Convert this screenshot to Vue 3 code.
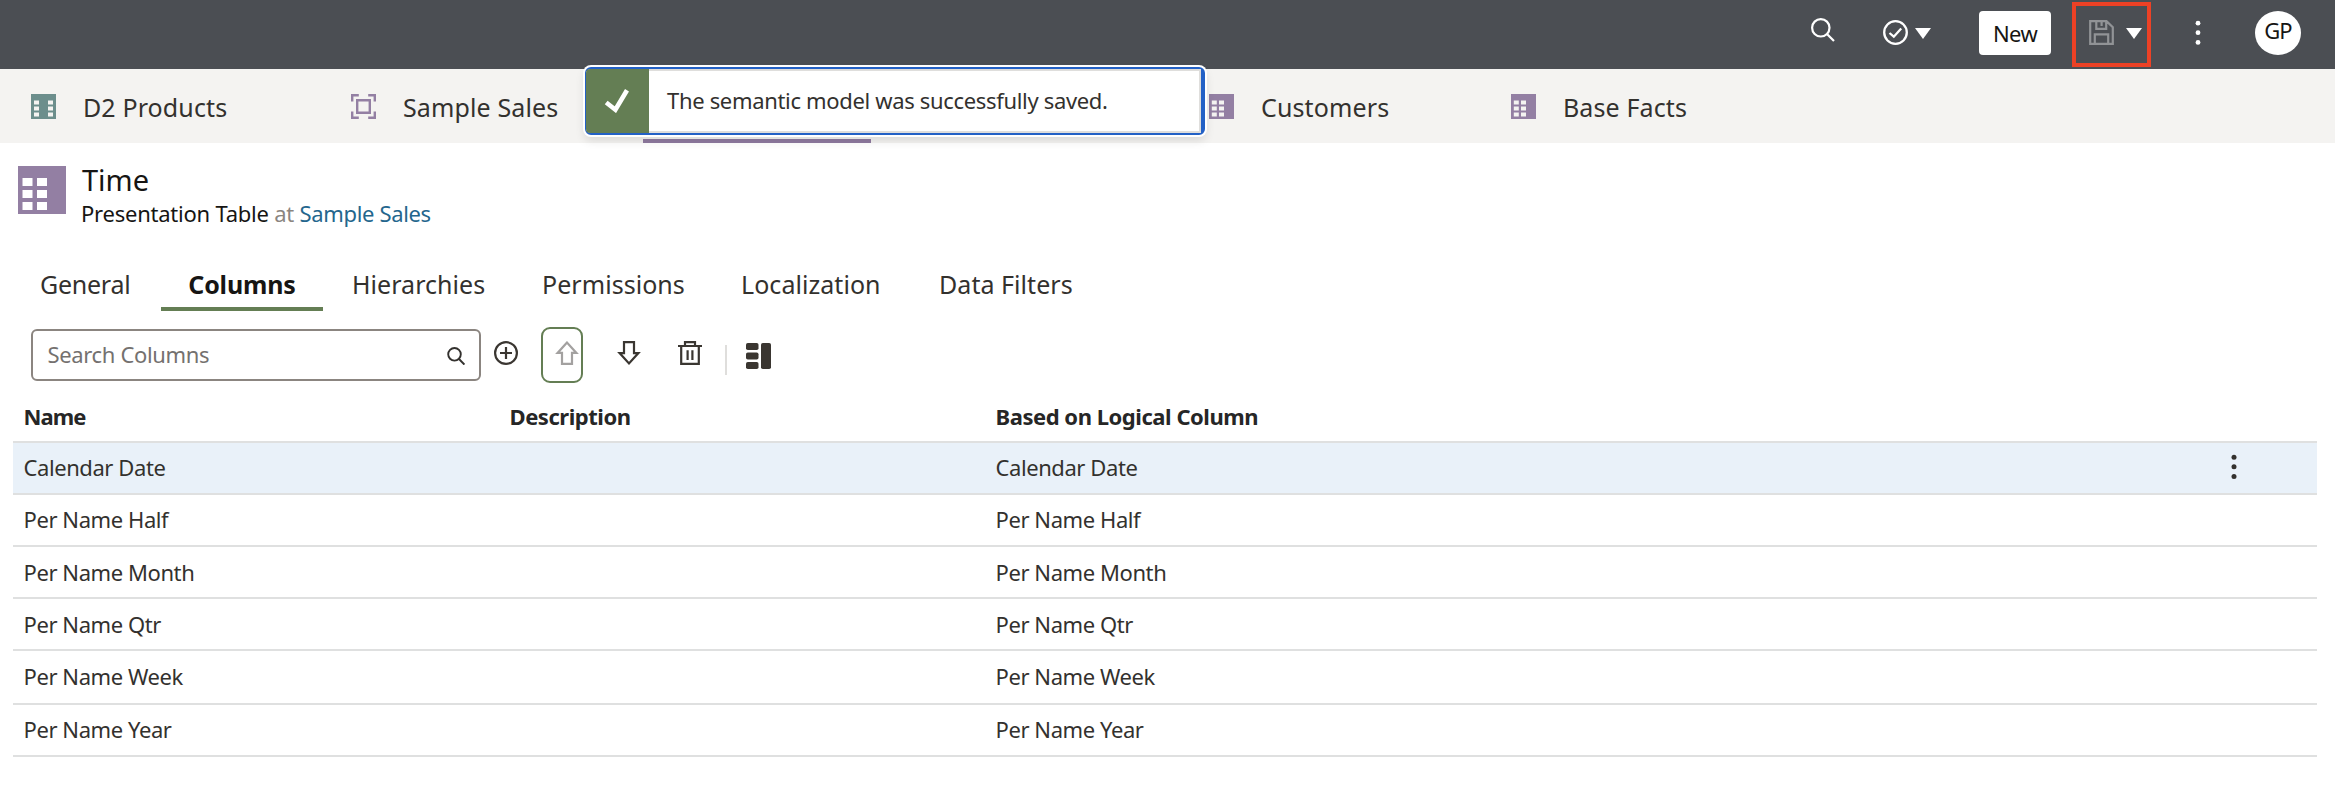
<script setup>
const editorTabs = [
  { label: 'D2 Products', icon: 'logical' },
  { label: 'Sample Sales', icon: 'subject' },
  { label: '', icon: '', active: true },
  { label: 'Customers', icon: 'table' },
  { label: 'Base Facts', icon: 'table' },
]
const sections = ['General', 'Columns', 'Hierarchies', 'Permissions', 'Localization', 'Data Filters']
const columns = ['Calendar Date', 'Per Name Half', 'Per Name Month', 'Per Name Qtr', 'Per Name Week', 'Per Name Year']
</script>

<template>
  <div class="page">
    <header class="topbar">
      <svg class="find" viewBox="0 0 24 24"><circle cx="9.8" cy="9.8" r="8.7" /><path d="M16 16l7 7" /></svg>
      <svg class="valid" viewBox="0 0 25 25"><circle cx="12.5" cy="12.5" r="11.3" /><path d="M6.5 13l4.3 3.7 7.4-8.2" /></svg>
      <svg class="caret" viewBox="0 0 16 11"><path d="M0 0h16L8 11z" /></svg>
      <button class="new">New</button>
      <div class="save-group">
        <svg class="save" viewBox="0 0 25 25"><path d="M1.2 1.2h16.3l6.3 6v16.6H1.2zM7.3 1v7.8h9.9V1M12.6 1v5M5.8 24V14.4h13.4V24" /></svg>
        <svg class="caret" viewBox="0 0 16 11"><path d="M0 0h16L8 11z" /></svg>
      </div>
      <svg class="dots" viewBox="0 0 6 26"><circle cx="3" cy="3.2" r="2.4" /><circle cx="3" cy="12.7" r="2.4" /><circle cx="3" cy="22.4" r="2.4" /></svg>
      <div class="avatar">GP</div>
    </header>

    <nav class="editors">
      <div v-for="(tab, i) in editorTabs" :key="i" class="editor" :class="{ active: tab.active }">
        <svg v-if="tab.icon === 'logical'" viewBox="0 0 25 25">
          <path fill="#6c8e8c" d="M0 0h25v25H0z" />
          <path fill="#f4f3f1" d="M3 6.5h5v4H3zm0 6h5v4H3zm0 6h5v4H3zM17 6.5h5v4h-5zm0 6h5v4h-5zm0 6h5v4h-5z" />
        </svg>
        <svg v-else-if="tab.icon === 'subject'" viewBox="0 0 25 25" fill="none" stroke="#937fa3">
          <path stroke-width="2.4" d="M1.2 7.5V1.2h6.6M17.2 1.2h6.6v6.3M23.8 17.5v6.3h-6.6M7.8 23.8H1.2v-6.3" />
          <path stroke-width="2.4" d="M6.2 6.2h12.6v12.6H6.2z" />
        </svg>
        <svg v-else-if="tab.icon === 'table'" viewBox="0 0 25 25">
          <path fill="#937fa3" d="M0 0h25v25H0z" />
          <path fill="#f4f3f1" d="M2.8 6.5h5v4h-5zm0 6h5v4h-5zm0 6h5v4h-5zM10 6.5h5v4h-5zm0 6h5v4h-5zm0 6h5v4h-5z" />
        </svg>
        <span v-if="tab.label">{{ tab.label }}</span>
      </div>
    </nav>

    <section class="heading">
      <svg viewBox="0 0 48 48">
        <path fill="#937fa3" d="M0 0h48v48H0z" />
        <path fill="#fff" d="M4.5 12h10v8h-10zm0 12h10v8h-10zm0 12h10v8h-10zM19 12h10v8H19zm0 12h10v8H19zm0 12h10v8H19z" />
      </svg>
      <div>
        <h1>Time</h1>
        <p>Presentation Table <span class="at">at</span> <a>Sample Sales</a></p>
      </div>
    </section>

    <nav class="sections">
      <div v-for="s in sections" :key="s" :class="{ current: s === 'Columns' }">{{ s }}</div>
    </nav>

    <div class="toolbar">
      <div class="search">
        <span>Search Columns</span>
        <svg viewBox="0 0 18 18"><circle cx="7.5" cy="7.3" r="6.3" /><path d="M12 12l5.4 5.6" /></svg>
      </div>
      <svg class="tool plus" viewBox="0 0 24 24"><circle cx="12" cy="12" r="10.9" /><path d="M12 6v12M6 12h12" /></svg>
      <button class="up">
        <svg class="tool" viewBox="0 0 24 24"><path d="M12 1.6L2.6 11.9H7v11h10v-11h4.4z" /></svg>
      </button>
      <svg class="tool down" viewBox="0 0 24 24"><path d="M7 1.1h10v11h4.4L12 22.4 2.6 12.1H7z" /></svg>
      <svg class="tool trash" viewBox="0 0 24 24"><path d="M0 5h24M7 5V1.1h10V5M3.2 5v17.9h17.6V5M9.6 9.3v9.6M14.4 9.3v9.6" /></svg>
      <i class="divider"></i>
      <svg class="layout" viewBox="0 0 25 26"><rect width="12.5" height="7" rx="1.8" /><rect y="9.5" width="12.5" height="7" rx="1.8" /><rect y="19" width="12.5" height="7" rx="1.8" /><rect x="15" width="10" height="26" rx="1.8" /></svg>
    </div>

    <div class="table">
      <div class="row head"><span>Name</span><span>Description</span><span>Based on Logical Column</span></div>
      <div v-for="(c, i) in columns" :key="c" class="row" :class="{ selected: i === 0, low: i > 1 && i < 5, tall: i === 4 }">
        <span>{{ c }}</span><span></span><span>{{ c }}</span>
        <svg v-if="i === 0" class="dots" viewBox="0 0 6 26"><circle cx="3" cy="3.2" r="2.5" /><circle cx="3" cy="12.7" r="2.5" /><circle cx="3" cy="22.4" r="2.5" /></svg>
      </div>
    </div>

    <div class="toast">
      <div class="status"><svg viewBox="0 0 26 25"><path d="M2.2 14.5l9.2 7.2L23 2.2" /></svg></div>
      <div class="message">The semantic model was successfully saved.</div>
    </div>
  </div>
</template>

<style>
body { margin: 0; background: #fff; }
</style>

<style scoped>
.page {
  position: relative;
  width: 2335px;
  height: 796px;
  overflow: hidden;
  font-family: "Noto Sans", sans-serif;
  font-size: 22px;
  letter-spacing: -0.35px;
  color: #33312e;
  background: #fff;
}
svg { display: block; flex: none; }
button { padding: 0; font: inherit; letter-spacing: inherit; }
span, a, p, h1, .editor, .sections div { white-space: nowrap; }

.topbar {
  box-sizing: border-box;
  height: 69px;
  display: flex;
  align-items: flex-start;
  padding-left: 1811px;
  background: #4b4e53;
}
.find { width: 24px; height: 24px; margin-top: 18px; fill: none; stroke: #fff; stroke-width: 2.2; }
.valid { width: 25px; height: 25px; margin: 20px 0 0 48px; fill: none; stroke: #fff; stroke-width: 2.3; }
.caret { width: 16px; height: 11px; fill: #fff; }
.topbar > .caret { margin: 28px 0 0 7px; }
.new {
  width: 72px;
  height: 44px;
  margin: 11px 0 0 48px;
  border: 0;
  border-radius: 4px;
  background: #fff;
  color: #161513;
  letter-spacing: -0.6px;
  line-height: 43px;
}
.save-group {
  box-sizing: border-box;
  width: 79px;
  height: 65px;
  margin: 2px 0 0 21px;
  border: 4px solid #ed4125;
  display: flex;
}
.save { width: 25px; height: 25px; margin: 14px 0 0 13px; fill: none; stroke: #919396; stroke-width: 2.2; }
.save-group .caret { margin: 22px 0 0 12px; }
.dots { width: 6px; height: 26px; }
.topbar .dots { margin: 20px 0 0 44px; fill: #fff; }
.avatar {
  width: 46px;
  height: 44px;
  margin: 11px 0 0 54px;
  border-radius: 50%;
  background: #fff;
  color: #161513;
  text-align: center;
  line-height: 39px;
  letter-spacing: -0.8px;
}

.editors {
  height: 74px;
  display: grid;
  grid-template-columns: 320px 323px 535px 302px 1fr;
  grid-template-rows: 74px;
  background: #f4f3f1;
  font-size: 25px;
  letter-spacing: 0.12px;
  line-height: 77px;
}
.editor { display: flex; gap: 27px; padding-left: 31px; }
.editor svg { width: 25px; height: 25px; margin-top: 25px; }
.editor.active { width: 228px; box-sizing: border-box; border-bottom: 4px solid #8f7a9f; }

.heading { display: flex; height: 108px; }
.heading svg { width: 48px; height: 48px; margin: 23px 16px 0 18px; }
h1 { margin: 18px 0 0; font-size: 29px; font-weight: 400; letter-spacing: 0; line-height: 38px; color: #161513; }
p { margin: -1px 0 0 -1px; line-height: 30px; letter-spacing: -0.23px; color: #161513; }
.at { color: #8b8580; }
a { color: #24668d; letter-spacing: -0.35px; }

.sections {
  display: grid;
  grid-template-columns: 148px 162px 190px 199px 198px 1fr;
  grid-template-rows: 60px;
  padding-left: 13px;
  font-size: 25px;
  letter-spacing: 0.05px;
  line-height: 66px;
}
.sections div { padding-left: 29px; }
.sections div:first-child { padding-left: 27px; letter-spacing: -0.25px; }
.sections .current {
  padding: 0;
  text-align: center;
  font-weight: 700;
  letter-spacing: -0.15px;
  color: #161513;
  box-sizing: border-box;
  border-bottom: 4px solid #647e54;
}

.toolbar {
  box-sizing: border-box;
  display: flex;
  align-items: flex-start;
  height: 83px;
  padding: 16px 0 0 31px;
}
.search {
  box-sizing: border-box;
  width: 450px;
  height: 52px;
  margin-top: 2px;
  padding: 0 14.5px;
  border: 2px solid #8b8580;
  border-radius: 6px;
  display: flex;
  justify-content: space-between;
  color: #74716f;
  line-height: 47px;
}
.search svg { width: 18px; height: 18px; margin-top: 16px; fill: none; stroke: #33312e; stroke-width: 1.9; }
.tool { width: 24px; height: 24px; fill: none; stroke: #3a3631; stroke-width: 2.2; }
.plus { margin: 14px 0 0 13px; }
.up {
  box-sizing: border-box;
  width: 42px;
  height: 56px;
  margin-left: 23px;
  border: 2px solid #647e54;
  border-radius: 9px;
  background: none;
  display: flex;
}
.up .tool { margin: 12px 0 0 12px; stroke: #a3a1a0; }
.down { margin: 14px 0 0 33.5px; }
.trash { margin: 14px 0 0 37px; }
.divider { width: 2px; height: 30px; margin: 18px 0 0 23px; background: #dfdedc; }
.layout { width: 25px; height: 26px; margin: 16px 0 0 19px; fill: #3a3631; }

.table { margin: 0 18px 0 13px; }
.row {
  display: grid;
  grid-template-columns: 486px 486px 1222px auto;
  height: 50px;
  border-bottom: 2px solid #dfe0e0;
  line-height: 48px;
}
.row span { padding-left: 10.5px; letter-spacing: -0.42px; }
.row.head { height: 47px; line-height: 45px; font-weight: 700; color: #262626; }
.row.head span { letter-spacing: -0.46px; }
.row.head span:first-child { letter-spacing: -0.9px; }
.row.selected { background: #e9f1f9; }
.row.low { line-height: 51px; }
.row.tall { height: 52px; }
.row .dots { margin: 11px 0 0 24px; fill: #33312e; }

.toast {
  position: absolute;
  left: 585px;
  top: 67px;
  box-sizing: border-box;
  width: 620px;
  height: 68px;
  border: solid #2361c6;
  border-width: 2px 4px 2px 1px;
  border-radius: 6px;
  display: flex;
  background: #fff;
  box-shadow: 0 0 0 2px #fff, 0 5px 10px 1px rgba(0, 0, 0, 0.1);
}
.status { width: 63px; border-radius: 4px 0 0 4px; background: #647e54; }
.status svg { width: 26px; height: 25px; margin: 19px 0 0 18px; fill: none; stroke: #fff; stroke-width: 4.6; }
.message {
  flex: 1;
  padding-left: 18px;
  border: solid #dfdedc;
  border-width: 2px 2px 2px 0;
  line-height: 59px;
  letter-spacing: -0.33px;
  white-space: nowrap;
}
</style>
